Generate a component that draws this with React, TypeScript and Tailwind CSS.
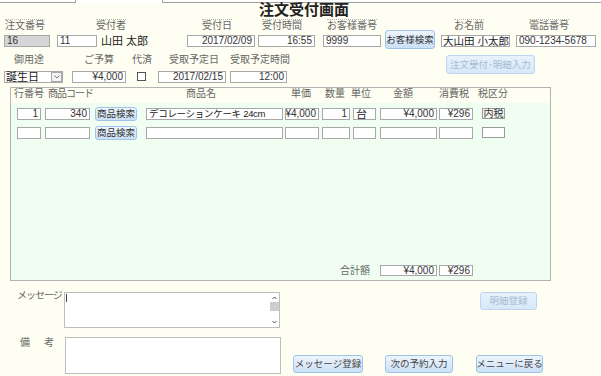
import React from "react";

function Box({ c = "", right = false, children }: { c?: string; right?: boolean; children?: React.ReactNode }) {
  return (
    <div
      className={`h-[12px] shrink-0 bg-white border border-[#a8a8a8] text-[10px] leading-[10px] text-[#333] px-[2px] flex items-center overflow-hidden whitespace-nowrap ${right ? "justify-end" : ""} ${c}`}
    >
      {children}
    </div>
  );
}

function Lbl({ c = "", dot = false, children }: { c?: string; dot?: boolean; children?: React.ReactNode }) {
  return (
    <span
      className={`shrink-0 text-[10px] leading-[12px] text-[#666] whitespace-nowrap ${dot ? "border-t border-dotted border-[#b5b5b5]" : ""} ${c}`}
    >
      {children}
    </span>
  );
}

function Btn({ c = "", off = false, children }: { c?: string; off?: boolean; children?: React.ReactNode }) {
  return (
    <div
      className={`shrink-0 flex items-center justify-center rounded-[3px] border text-[9.5px] leading-[10px] whitespace-nowrap ${
        off
          ? "border-[#bcd5ee] bg-linear-to-b from-[#e8f2fc] to-[#d6e8f9] text-[#a7bbd0]"
          : "border-[#9fc3e8] bg-linear-to-b from-[#eef5fd] to-[#cbe0f6] text-[#333]"
      } ${c}`}
    >
      {children}
    </div>
  );
}

export default function App() {
  return (
    <div className="w-[601px] h-[376px] overflow-hidden bg-[#fefef2] font-['Liberation_Sans','Noto_Sans_CJK_JP',sans-serif]">
      {/* tab strip */}
      <div className="h-[3px] bg-white flex">
        <div className="w-[76px] border-b border-r border-[#a0a0a0]" />
        <div className="w-[86px]" />
        <div className="flex-1 border-b border-l border-[#a0a0a0]" />
      </div>

      {/* title */}
      <div className="h-[16px] pl-[259px] text-[15px] leading-[13px] font-bold text-[#222] whitespace-nowrap">
        注文受付画面
      </div>

      {/* labels row 1 */}
      <div className="h-[16px] flex items-start">
        <Lbl dot c="ml-[5px] w-[40px]">注文番号</Lbl>
        <Lbl dot c="ml-[51px] w-[30px]">受付者</Lbl>
        <Lbl dot c="ml-[76px] w-[30px]">受付日</Lbl>
        <Lbl dot c="ml-[30px] w-[40px]">受付時間</Lbl>
        <Lbl dot c="ml-[25px] w-[50px]">お客様番号</Lbl>
        <Lbl dot c="ml-[77px] w-[30px]">お名前</Lbl>
        <Lbl dot c="ml-[45px] w-[40px]">電話番号</Lbl>
      </div>

      {/* fields row 1 */}
      <div className="h-[12px] flex items-start">
        <Box c="ml-[4px] w-[46px] !bg-[#d6d6d6]">16</Box>
        <Box c="ml-[7px] w-[40px]">11</Box>
        <span className="ml-[4px] w-[86px] shrink-0 text-[11px] leading-[12px] text-[#222] whitespace-nowrap">山田 太郎</span>
        <Box right c="w-[68px]">2017/02/09</Box>
        <Box right c="ml-[3px] w-[57px]">16:55</Box>
        <Box c="ml-[8px] w-[58px]">9999</Box>
        <Btn c="ml-[4px] w-[50px] h-[19px] mt-[-5px]">お客様検索</Btn>
        <Box c="ml-[6px] w-[69px] !px-[1px] !text-[10.5px] !text-[#222]">大山田 小太郎</Box>
        <Box c="ml-[6px] w-[80px]">090-1234-5678</Box>
      </div>

      {/* labels row 2 */}
      <div className="h-[24px] flex items-start">
        <Lbl c="ml-[14px] mt-[7px] w-[30px]">御用途</Lbl>
        <Lbl c="ml-[40px] mt-[7px] w-[30px]">ご予算</Lbl>
        <Lbl c="ml-[18px] mt-[7px] w-[20px]">代済</Lbl>
        <Lbl c="ml-[17px] mt-[7px] w-[50px]">受取予定日</Lbl>
        <Lbl c="ml-[11px] mt-[7px] w-[60px]">受取予定時間</Lbl>
        <Btn off c="ml-[156px] mt-[8px] w-[89px] h-[19px]">注文受付･明細入力</Btn>
      </div>

      {/* fields row 2 */}
      <div className="h-[12px] flex items-start">
        <div className="ml-[4px] w-[59px] h-[12px] shrink-0 bg-white border border-[#a8a8a8] flex items-stretch">
          <span className="flex-1 pl-[1px] text-[11px] leading-[10px] text-[#222] whitespace-nowrap">誕生日</span>
          <div className="w-[11px] border border-[#a8a8a8] bg-[#f4f4f4] flex items-center justify-center">
            <svg width="6" height="4" viewBox="0 0 6 4">
              <path d="M0.5 0.5 L3 3 L5.5 0.5" fill="none" stroke="#777" strokeWidth="1" />
            </svg>
          </div>
        </div>
        <Box right c="ml-[9px] w-[54px]">¥4,000</Box>
        <div className="ml-[11px] mt-[1px] w-[9px] h-[9px] shrink-0 bg-white border border-[#555]" />
        <Box right c="ml-[12px] w-[68px]">2017/02/15</Box>
        <Box right c="ml-[4px] w-[57px]">12:00</Box>
      </div>

      {/* detail box */}
      <div className="mt-[4px] ml-[10px] w-[541px] h-[194px] border border-[#b4b4b4] flex flex-col">
        <div className="h-[15px] flex items-start shrink-0">
          <Lbl c="ml-[3px] w-[30px]">行番号</Lbl>
          <Lbl c="ml-[4px] w-[45px] tracking-[-1px]">商品コード</Lbl>
          <Lbl c="ml-[93px] w-[30px]">商品名</Lbl>
          <Lbl c="ml-[75px] w-[20px]">単価</Lbl>
          <Lbl c="ml-[14px] w-[20px]">数量</Lbl>
          <Lbl c="ml-[6px] w-[20px]">単位</Lbl>
          <Lbl c="ml-[22px] w-[20px]">金額</Lbl>
          <Lbl c="ml-[26px] w-[30px]">消費税</Lbl>
          <Lbl c="ml-[9px] w-[30px]">税区分</Lbl>
        </div>
        <div className="flex-1 bg-[#effef0] flex flex-col pt-[5px] pb-[4px]">
          <div className="h-[12px] flex items-start">
            <Box right c="ml-[6px] w-[24px]">1</Box>
            <Box right c="ml-[4px] w-[45px]">340</Box>
            <Btn c="ml-[5px] w-[42px] h-[14px] mt-[-1px]">商品検索</Btn>
            <Box c="ml-[9px] w-[137px] !text-[9.5px] !text-[#222] tracking-[-0.3px]">デコレーションケーキ 24cm</Box>
            <Box right c="ml-[2px] w-[34px]">¥4,000</Box>
            <Box right c="ml-[3px] w-[28px]">1</Box>
            <Box c="ml-[3px] w-[23px] !text-[11px] !text-[#222]">台</Box>
            <Box right c="ml-[4px] w-[57px]">¥4,000</Box>
            <Box right c="ml-[2px] w-[34px]">¥296</Box>
            <div className="ml-[9px] w-[23px] h-[11px] shrink-0 bg-[#f6f6f0] border border-[#9a9a9a] flex items-center justify-center text-[10px] leading-[10px] text-[#333]">
              内税
            </div>
          </div>
          <div className="h-[12px] mt-[7px] flex items-start">
            <Box c="ml-[6px] w-[24px]" />
            <Box c="ml-[4px] w-[45px]" />
            <Btn c="ml-[5px] w-[42px] h-[14px] mt-[-1px]">商品検索</Btn>
            <Box c="ml-[9px] w-[137px]" />
            <Box c="ml-[2px] w-[34px]" />
            <Box c="ml-[3px] w-[28px]" />
            <Box c="ml-[3px] w-[23px]" />
            <Box c="ml-[4px] w-[57px]" />
            <Box c="ml-[2px] w-[34px]" />
            <div className="ml-[9px] w-[23px] h-[11px] shrink-0 bg-white border border-[#9a9a9a]" />
          </div>
          <div className="mt-auto h-[11px] flex items-center">
            <Lbl c="ml-[329px] w-[30px]">合計額</Lbl>
            <Box right c="ml-[10px] w-[57px] !h-[11px]">¥4,000</Box>
            <Box right c="ml-[2px] w-[34px] !h-[11px]">¥296</Box>
          </div>
        </div>
      </div>

      {/* bottom section */}
      <div className="mt-[11px] flex">
        <div className="w-[281px] shrink-0 flex flex-col">
          <div className="flex items-start h-[36px]">
            <Lbl c="ml-[17px] mt-[-2px] w-[47px] tracking-[-1px]">メッセージ</Lbl>
            <div className="w-[216px] h-[36px] shrink-0 bg-white border border-[#bdbdbd] flex">
              <div className="flex-1 pl-[1px] pt-[1px]">
                <div className="w-[1px] h-[8px] bg-[#444]" />
              </div>
              <div className="w-[9px] flex flex-col items-center">
                <svg width="7" height="9" viewBox="0 0 7 9">
                  <path d="M1.5 6 L3.5 4 L5.5 6" fill="none" stroke="#555" strokeWidth="1" />
                </svg>
                <div className="w-[9px] h-[9px] bg-[#cdcdcd]" />
                <div className="flex-1" />
                <svg width="7" height="9" viewBox="0 0 7 9">
                  <path d="M1.5 3 L3.5 5 L5.5 3" fill="none" stroke="#555" strokeWidth="1" />
                </svg>
              </div>
            </div>
          </div>
          <div className="flex items-start mt-[9px]">
            <Lbl c="ml-[20px] w-[45px] tracking-[2px]">備　考</Lbl>
            <div className="w-[216px] h-[37px] shrink-0 bg-white border border-[#bdbdbd]" />
          </div>
        </div>
        <div className="flex-1 flex flex-col">
          <Btn off c="ml-[199px] w-[57px] h-[18px]">明細登録</Btn>
          <div className="mt-[45px] flex">
            <Btn c="ml-[12px] w-[70px] h-[18px] !text-[#444]">メッセージ登録</Btn>
            <Btn c="ml-[22px] w-[68px] h-[18px] !text-[#444]">次の予約入力</Btn>
            <Btn c="ml-[23px] w-[67px] h-[18px] !text-[#444]">メニューに戻る</Btn>
          </div>
        </div>
      </div>
    </div>
  );
}
